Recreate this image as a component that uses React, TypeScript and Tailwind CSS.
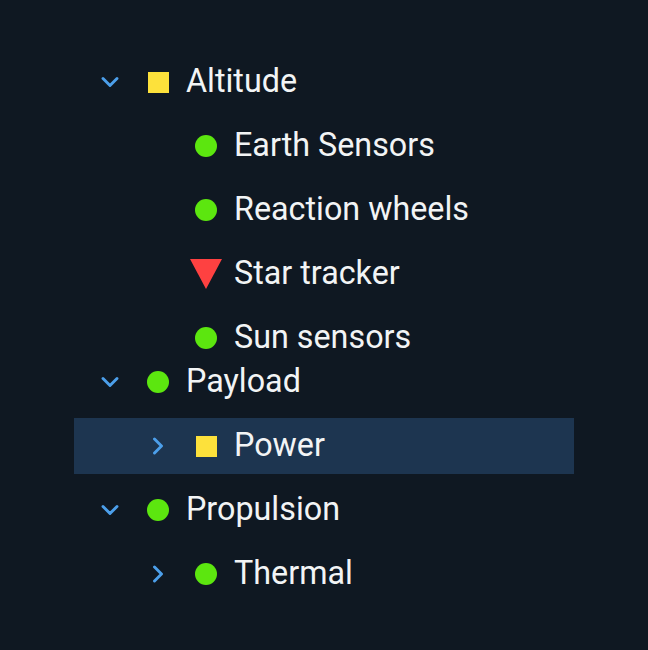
import React from "react";

type Status = "ok" | "warn" | "err";
type Row = { label: string; level: number; chevron?: "down" | "right"; status: Status; selected?: boolean; pullUp?: boolean };

const rows: Row[] = [
  { label: "Altitude", level: 0, chevron: "down", status: "warn" },
  { label: "Earth Sensors", level: 1, status: "ok" },
  { label: "Reaction wheels", level: 1, status: "ok" },
  { label: "Star tracker", level: 1, status: "err" },
  { label: "Sun sensors", level: 1, status: "ok" },
  { label: "Payload", level: 0, chevron: "down", status: "ok", pullUp: true },
  { label: "Power", level: 1, chevron: "right", status: "warn", selected: true },
  { label: "Propulsion", level: 0, chevron: "down", status: "ok" },
  { label: "Thermal", level: 1, chevron: "right", status: "ok" },
];

function Chevron({ dir }: { dir: "down" | "right" }) {
  return dir === "down" ? (
    <svg width="18" height="12" viewBox="0 0 18 12" fill="none">
      <path d="M2 2.5 L9 9.5 L16 2.5" stroke="#4c9fea" strokeWidth="2.9" strokeLinecap="round" strokeLinejoin="round" />
    </svg>
  ) : (
    <svg width="12" height="18" viewBox="0 0 12 18" fill="none">
      <path d="M2.5 2 L9.5 9 L2.5 16" stroke="#4c9fea" strokeWidth="2.9" strokeLinecap="round" strokeLinejoin="round" />
    </svg>
  );
}

function StatusIcon({ s }: { s: Status }) {
  if (s === "warn") return <div className="w-[21px] h-[21px] bg-[#fde13b]" />;
  if (s === "ok") return <div className="w-[22px] h-[22px] rounded-full bg-[#5ce60f]" />;
  return (
    <svg width="32" height="30" viewBox="0 0 32 30">
      <polygon points="0,0 32,0 16,30" fill="#fe4141" />
    </svg>
  );
}

export default function App() {
  return (
    <div className="w-[648px] h-[650px] bg-[#0f1822] pt-[54px] pl-[74px]" style={{ fontFamily: "Roboto, 'Noto Sans', sans-serif" }}>
      <div className="w-[500px] flex flex-col gap-2">
        {rows.map((r, i) => (
          <div
            key={i}
            className={`h-[56px] flex items-center ${r.selected ? "bg-[#1d3550]" : ""} ${r.pullUp ? "-mt-5" : ""}`}
          >
            <div className={r.level === 1 ? "w-[60px]" : "w-[12px]"} />
            <div className="w-[48px] h-full flex items-center justify-center">
              {r.chevron ? <Chevron dir={r.chevron} /> : null}
            </div>
            <div className="w-[48px] h-full flex items-center justify-center">
              <StatusIcon s={r.status} />
            </div>
            <span className="ml-[4px] mb-[2px] text-[32.3px] leading-none text-[#f2f4f5]">{r.label}</span>
          </div>
        ))}
      </div>
    </div>
  );
}
